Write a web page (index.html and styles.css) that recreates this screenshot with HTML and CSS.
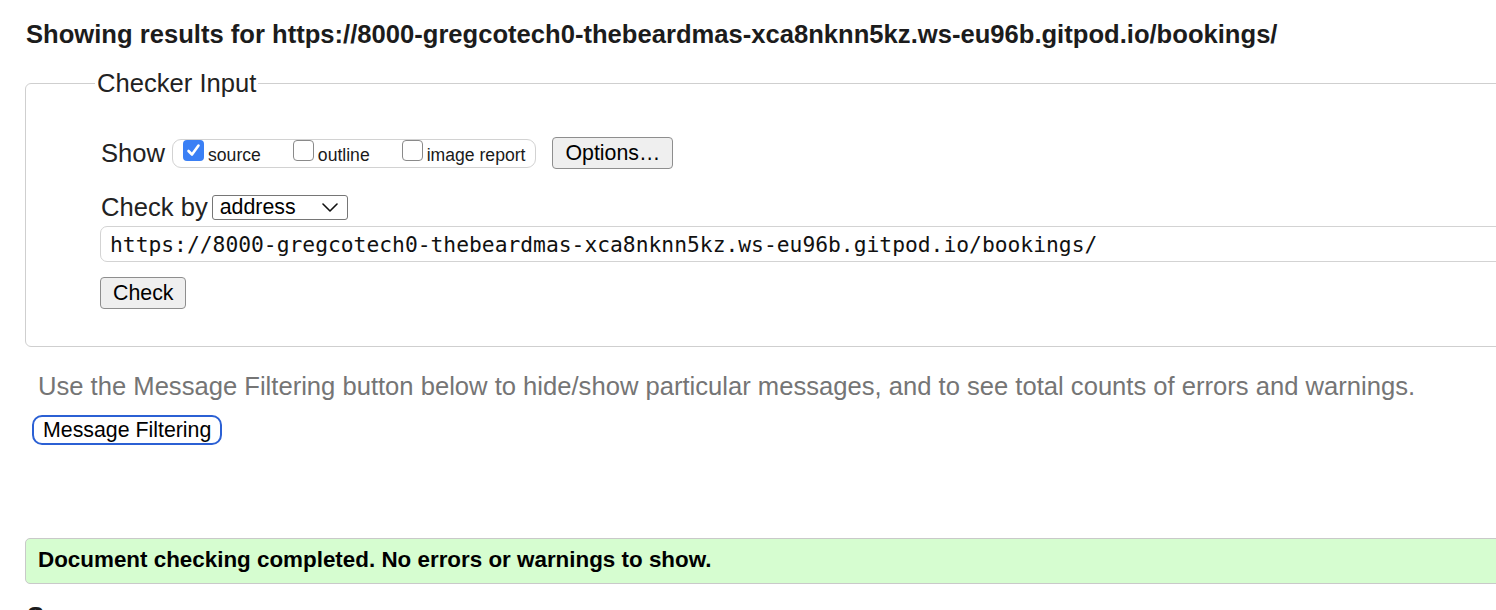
FILE: index.html
```html
<!DOCTYPE html>
<html lang="en">
<head>
<meta charset="utf-8">
<title>Showing results - Nu Html Checker</title>
<link rel="stylesheet" href="styles.css">
</head>
<body>
<main class="page">
  <h2 class="results-title">Showing results for https://8000-gregcotech0-thebeardmas-xca8nknn5kz.ws-eu96b.gitpod.io/bookings/</h2>
  <form class="checker">
    <fieldset class="checker-input">
      <legend class="checker-legend">Checker Input</legend>
      <div class="fields">
        <div class="row show-row">
          <span class="row-label">Show</span>
          <div class="show-options">
            <label class="opt"><span class="cb cb-checked"><svg viewBox="0 0 21 21" width="21" height="21"><path d="M5.5 11 L9 14.5 L15.5 5.5" fill="none" stroke="#fff" stroke-width="2.6" stroke-linecap="round" stroke-linejoin="round"/></svg></span><span class="opt-text">source</span></label>
            <label class="opt"><span class="cb"></span><span class="opt-text">outline</span></label>
            <label class="opt"><span class="cb"></span><span class="opt-text">image report</span></label>
          </div>
          <button type="button" class="btn options-btn">Options…</button>
        </div>
        <div class="row checkby-row">
          <span class="row-label">Check by</span>
          <span class="select-wrap">
            <select class="checkby-select"><option>address</option></select>
            <svg class="chevron" viewBox="0 0 16 9" width="16" height="9"><path d="M1 1 L8 8 L15 1" fill="none" stroke="#111" stroke-width="1.6" stroke-linecap="round" stroke-linejoin="round"/></svg>
          </span>
        </div>
        <input class="url-input" type="url" value="https://8000-gregcotech0-thebeardmas-xca8nknn5kz.ws-eu96b.gitpod.io/bookings/">
        <button type="button" class="btn check-btn">Check</button>
      </div>
    </fieldset>
  </form>
  <p class="filter-note">Use the Message Filtering button below to hide/show particular messages, and to see total counts of errors and warnings.</p>
  <button type="button" class="filter-btn">Message Filtering</button>
  <div class="success">Document checking completed. No errors or warnings to show.</div>
  <h2 class="source-title">Source</h2>
</main>
</body>
</html>
```
FILE: styles.css
```css
html, body {
  margin: 0;
  padding: 0;
  overflow: hidden;
  background: #fff;
}

body {
  font-family: "Liberation Sans", Arial, sans-serif;
  color: #222;
}

.page {
  width: 1600px;
  padding-left: 25px;
}

.results-title {
  margin: 19px 0 0 1px;
  font-size: 25.6px;
  line-height: 30px;
  font-weight: bold;
  color: #1c1c1c;
}

.checker {
  margin: 19px 0 0 0;
}

.checker-input {
  margin: 0;
  padding: 0;
  min-width: 0;
  border: 1px solid #cfcfcf;
  border-radius: 6px;
}

.checker-legend {
  margin-left: 69px;
  padding: 0 2px;
  font-size: 25.6px;
  line-height: 30px;
  color: #222;
}

.fields {
  padding: 39px 0 37px 74px;
}

.row {
  display: flex;
  align-items: center;
}

.row-label {
  font-size: 25.6px;
  line-height: 30px;
  color: #222;
  padding-left: 1px;
}

.show-row {
  height: 32px;
}

.show-row .row-label {
  margin-right: 7px;
}

.show-options {
  display: flex;
  align-items: flex-start;
  gap: 32px;
  height: 27px;
  padding: 0 10px;
  border: 1px solid #d2d2d2;
  border-radius: 9px;
}

.opt {
  display: flex;
  align-items: flex-start;
  font-size: 17.6px;
  color: #1a1a1a;
}

.cb {
  display: block;
  box-sizing: border-box;
  width: 21px;
  height: 21px;
  margin-right: 4px;
  border: 1.5px solid #8a8a8a;
  border-radius: 4px;
  background: #fff;
}

.cb-checked {
  border: none;
  background: #3a7ff5;
}

.cb-checked svg {
  display: block;
}

.opt-text {
  line-height: 23px;
  padding-top: 4px;
}

.btn {
  font-family: "Liberation Sans", Arial, sans-serif;
  font-size: 21.33px;
  color: #000;
  background: #efefef;
  border: 1px solid #8e8e8e;
  border-radius: 4px;
  height: 32px;
  padding: 0 12px;
  line-height: 30px;
}

.options-btn {
  margin-left: 16px;
}

.checkby-row {
  margin-top: 23px;
  height: 30px;
}

.checkby-row .row-label {
  margin-right: 4px;
}

.select-wrap {
  position: relative;
  display: block;
}

.checkby-select {
  appearance: none;
  -webkit-appearance: none;
  display: block;
  box-sizing: border-box;
  width: 136px;
  height: 25px;
  padding: 0 0 0 7px;
  margin: 0;
  border: 1px solid #767676;
  border-radius: 3px;
  background: #fff;
  font-family: "Liberation Sans", Arial, sans-serif;
  font-size: 21.33px;
  line-height: 23px;
  color: #000;
}

.chevron {
  position: absolute;
  right: 10px;
  top: 8px;
  pointer-events: none;
}

.url-input {
  display: block;
  box-sizing: border-box;
  width: 100%;
  height: 36px;
  margin: 4px 0 0 0;
  padding: 0 9px;
  border: 1px solid #d3d3d3;
  border-radius: 7px;
  font-family: "DejaVu Sans Mono", "Liberation Mono", monospace;
  font-size: 21.3px;
  color: #111;
  background: #fff;
}

.check-btn {
  display: block;
  margin-top: 15px;
}

.filter-note {
  margin: 24px 0 0 13px;
  font-size: 25.6px;
  line-height: 30px;
  color: #757575;
}

.filter-btn {
  display: block;
  box-sizing: border-box;
  margin: 14px 0 0 7px;
  height: 30px;
  padding: 0 9px;
  border: 2px solid #2b60d4;
  border-radius: 10px;
  background: #fff;
  font-family: "Liberation Sans", Arial, sans-serif;
  font-size: 21.33px;
  line-height: 26px;
  color: #000;
}

.success {
  margin-top: 93px;
  height: 46px;
  box-sizing: border-box;
  padding: 8px 12px 0;
  border: 1px solid #c9c9c9;
  border-radius: 5px;
  background: #d6fdd0;
  font-size: 22.4px;
  line-height: 26px;
  font-weight: bold;
  color: #000;
}

.source-title {
  margin: 17px 0 0 2px;
  font-size: 25.6px;
  line-height: 30px;
  font-weight: bold;
  color: #1c1c1c;
}
```
